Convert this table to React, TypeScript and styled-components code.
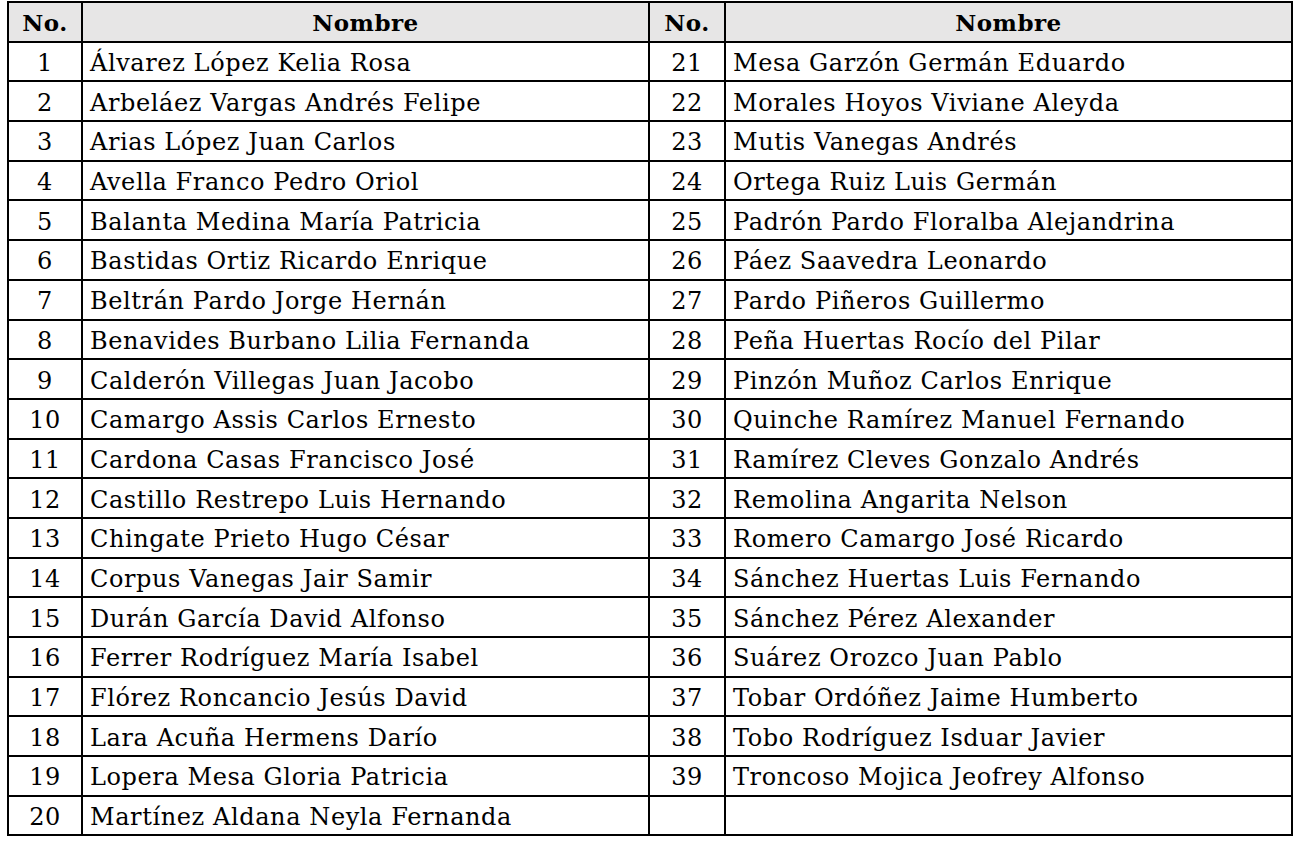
import React from "react";
import styled, { createGlobalStyle } from "styled-components";

const GlobalStyle = createGlobalStyle`
  html, body {
    margin: 0;
    padding: 0;
    background: #ffffff;
  }
`;

const Page = styled.div`
  padding: 1px 3px 0 7px;
  font-family: "DejaVu Serif", "Liberation Serif", serif;
  color: #000000;
`;

const Table = styled.table`
  width: 1286px;
  border-collapse: collapse;
  border: 2px solid #000;
  table-layout: fixed;
`;

const Row = styled.tr`
  height: 39.7px;
`;

const HeadCell = styled.th<{ $w?: number; $shift?: number }>`
  ${(p) => (p.$w ? `width: ${p.$w}px;` : "")}
  background: #e7e6e6;
  border: 2px solid #000;
  font-weight: bold;
  font-size: 23px;
  letter-spacing: 0.5px;
  text-align: center;
  padding: 2px ${(p) => p.$shift ?? 0}px 0 0;
`;

const NumCell = styled.td`
  border: 2px solid #000;
  font-size: 24px;
  letter-spacing: 0.6px;
  text-align: center;
  padding: 3px 0 0 0;
`;

const NameCell = styled.td`
  border: 2px solid #000;
  font-size: 24px;
  letter-spacing: 0.6px;
  text-align: left;
  padding: 3px 0 0 7px;
  white-space: nowrap;
`;

const names = [
  "Álvarez López Kelia Rosa",
  "Arbeláez Vargas Andrés Felipe",
  "Arias López Juan Carlos",
  "Avella Franco Pedro Oriol",
  "Balanta Medina María Patricia",
  "Bastidas Ortiz Ricardo Enrique",
  "Beltrán Pardo Jorge Hernán",
  "Benavides Burbano Lilia Fernanda",
  "Calderón Villegas Juan Jacobo",
  "Camargo Assis Carlos Ernesto",
  "Cardona Casas Francisco José",
  "Castillo Restrepo Luis Hernando",
  "Chingate Prieto Hugo César",
  "Corpus Vanegas Jair Samir",
  "Durán García David Alfonso",
  "Ferrer Rodríguez María Isabel",
  "Flórez Roncancio Jesús David",
  "Lara Acuña Hermens Darío",
  "Lopera Mesa Gloria Patricia",
  "Martínez Aldana Neyla Fernanda",
  "Mesa Garzón Germán Eduardo",
  "Morales Hoyos Viviane Aleyda",
  "Mutis Vanegas Andrés",
  "Ortega Ruiz Luis Germán",
  "Padrón Pardo Floralba Alejandrina",
  "Páez Saavedra Leonardo",
  "Pardo Piñeros Guillermo",
  "Peña Huertas Rocío del Pilar",
  "Pinzón Muñoz Carlos Enrique",
  "Quinche Ramírez Manuel Fernando",
  "Ramírez Cleves Gonzalo Andrés",
  "Remolina Angarita Nelson",
  "Romero Camargo José Ricardo",
  "Sánchez Huertas Luis Fernando",
  "Sánchez Pérez Alexander",
  "Suárez Orozco Juan Pablo",
  "Tobar Ordóñez Jaime Humberto",
  "Tobo Rodríguez Isduar Javier",
  "Troncoso Mojica Jeofrey Alfonso",
];

export default function App() {
  const rows = Array.from({ length: 20 }, (_, i) => i);
  return (
    <Page>
      <GlobalStyle />
      <Table>
        <thead>
          <Row>
            <HeadCell $w={72}>No.</HeadCell>
            <HeadCell $w={565}>Nombre</HeadCell>
            <HeadCell $w={74}>No.</HeadCell>
            <HeadCell>Nombre</HeadCell>
          </Row>
        </thead>
        <tbody>
          {rows.map((i) => {
            const right = i + 20;
            const hasRight = right < names.length;
            return (
              <Row key={i}>
                <NumCell>{i + 1}</NumCell>
                <NameCell>{names[i]}</NameCell>
                <NumCell>{hasRight ? right + 1 : ""}</NumCell>
                <NameCell>{hasRight ? names[right] : ""}</NameCell>
              </Row>
            );
          })}
        </tbody>
      </Table>
    </Page>
  );
}
